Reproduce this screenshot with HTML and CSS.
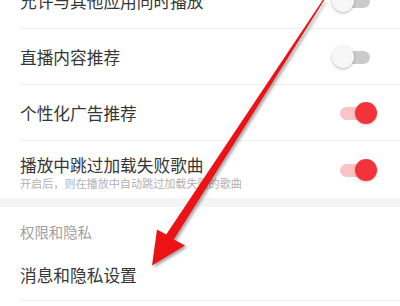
FILE: index.html
```
<!DOCTYPE html>
<html lang="zh-CN">
<head>
<meta charset="utf-8">
<link rel="stylesheet" href="styles.css">
</head>
<body>
<div class="screen">
  <div class="row first">
    <span class="title">允许与其他应用同时播放</span>
    <span class="toggle off"></span>
  </div>
  <div class="row">
    <span class="title">直播内容推荐</span>
    <span class="toggle off"></span>
  </div>
  <div class="row">
    <span class="title">个性化广告推荐</span>
    <span class="toggle on"></span>
  </div>
  <div class="row tall">
    <div class="text">
      <div class="title">播放中跳过加载失败歌曲</div>
      <div class="sub">开启后，则在播放中自动跳过加载失败的歌曲</div>
    </div>
    <span class="toggle on"></span>
  </div>
  <div class="band"></div>
  <div class="section">权限和隐私</div>
  <div class="row last">
    <span class="title">消息和隐私设置</span>
  </div>
  <svg class="arrow" width="400" height="306" viewBox="0 0 400 306">
    <polygon points="329.4,-10 330.6,-10 173.8,239.4 185,245.5 152,265.5 157,229.5 166.2,234.6" fill="#ec1216"/>
  </svg>
</div>
</body>
</html>
```
FILE: styles.css
```
* { box-sizing: border-box; }
html, body { margin: 0; padding: 0; background: #fff; }
.screen {
  position: relative;
  width: 400px;
  height: 306px;
  overflow: hidden;
  font-family: "Noto Sans CJK SC", "Noto Sans", sans-serif;
  color: #363636;
}
.row {
  display: flex;
  align-items: center;
  justify-content: space-between;
  height: 56px;
  margin-left: 20px;
  padding: 2px 22px 0 0;
  border-bottom: 1px solid #f0f0f0;
}
.row.first { margin-top: -27px; }
.row.tall { height: 57px; border-bottom: none; }
.title { font-size: 16.7px; line-height: 19px; }
.text { margin-top: 5px; }
.text .title { line-height: 17px; }
.sub { font-size: 11.1px; line-height: 13px; color: #b2b2b2; margin-top: 3px; }
.band { height: 9px; background: #f4f4f4; }
.section {
  height: 43px;
  padding: 15px 0 0 20px;
  font-size: 14.4px;
  line-height: 20px;
  color: #a0a0a0;
}
.row.last { height: 51px; padding-top: 0; }
.toggle {
  position: relative;
  width: 46px;
  height: 24px;
  flex: none;
}
.toggle::before {
  content: "";
  position: absolute;
  top: 5px;
  height: 13px;
  border-radius: 7px;
}
.toggle::after {
  content: "";
  position: absolute;
  top: 0;
  width: 22px;
  height: 22px;
  border-radius: 50%;
}
.toggle.off::before { left: 1px; width: 37px; background: #cbcbcb; }
.toggle.off::after { left: 0; background: #f7f7f7; box-shadow: 0 1px 3px rgba(0,0,0,0.28); }
.toggle.on::before { left: 8px; width: 32px; background: #f9c4c6; }
.toggle.on::after { left: 23px; background: #f2333b; box-shadow: 0 1px 3px rgba(0,0,0,0.22); }
.arrow {
  position: absolute;
  left: 0;
  top: 0;
  filter: drop-shadow(2px 2px 1.5px rgba(0,0,0,0.35));
}
```
